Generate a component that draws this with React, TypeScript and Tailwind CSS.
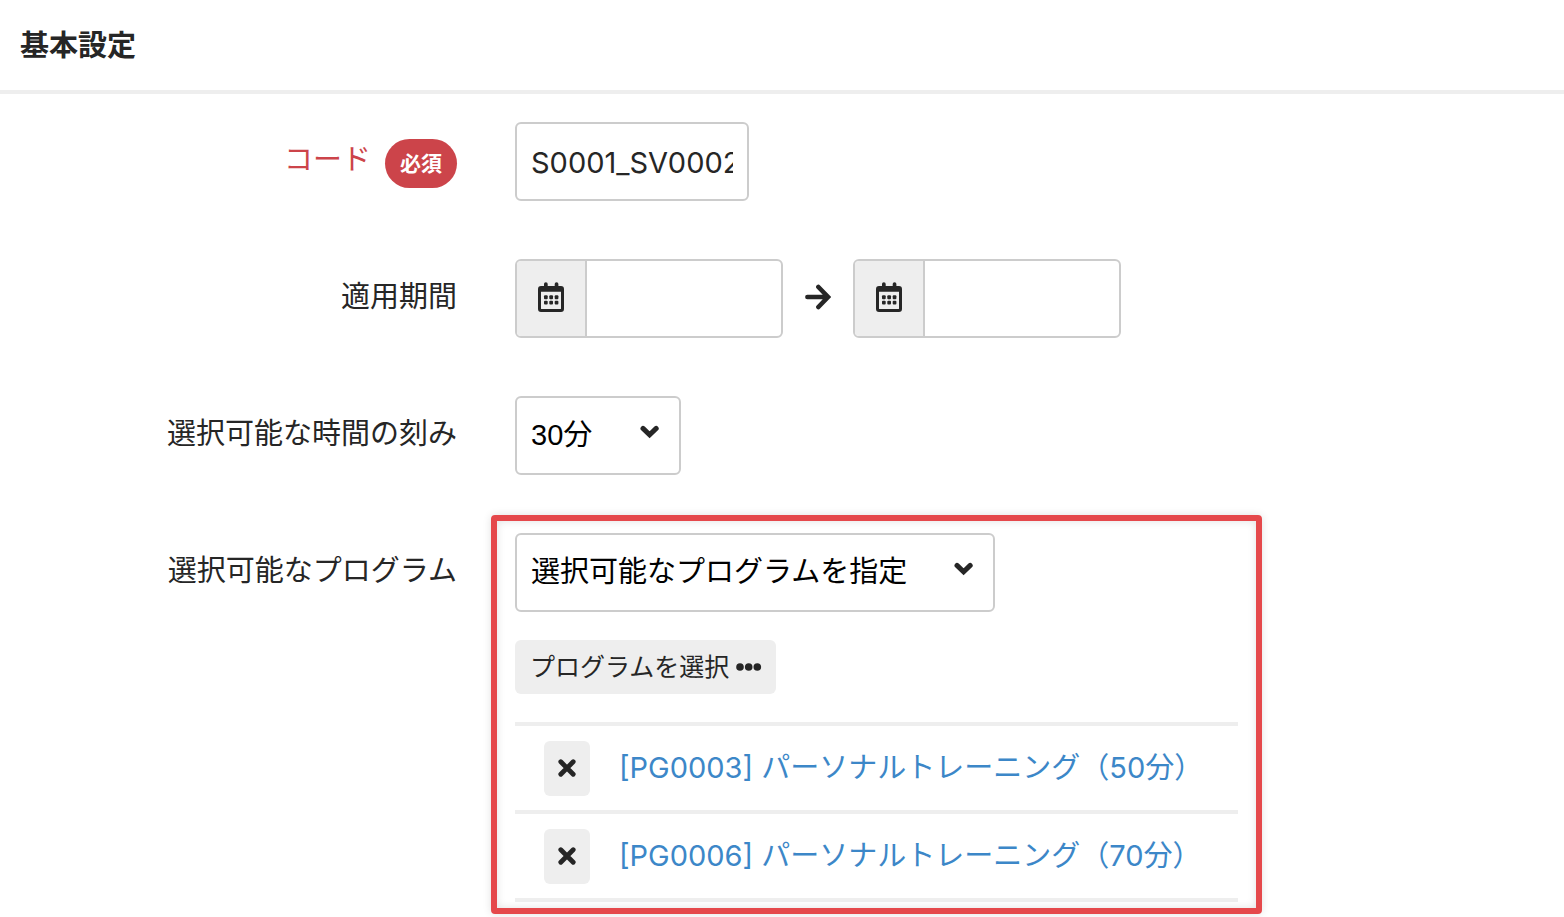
import type { ReactNode } from "react";

const programs = [
  { code: "PG0003", name: "パーソナルトレーニング（50分）" },
  { code: "PG0006", name: "パーソナルトレーニング（70分）" },
];

function CalendarIcon() {
  return (
    <svg width="26" height="30" viewBox="0 0 26 30" aria-hidden="true">
      <path
        fill="#262626"
        fillRule="evenodd"
        d="M3 4H6V2a1.85 1.85 0 0 1 3.7 0V4H16.7V2a1.85 1.85 0 0 1 3.7 0V4H23a3 3 0 0 1 3 3V27a3 3 0 0 1-3 3H3a3 3 0 0 1-3-3V7a3 3 0 0 1 3-3ZM3 9.7V26.4a.6.6 0 0 0 .6.6H22.4a.6.6 0 0 0 .6-.6V9.7Z"
      />
      {[13.3, 18.7].map((y) =>
        [6, 11.3, 16.7].map((x) => (
          <rect key={`${x}-${y}`} x={x} y={y} width="3.7" height="3.9" rx="1" fill="#262626" />
        )),
      )}
    </svg>
  );
}

function ArrowIcon() {
  return (
    <svg className="mb-1" width="26" height="26" viewBox="0 0 26 26" fill="none" stroke="#262626" strokeWidth="4.6" strokeLinecap="round" aria-hidden="true">
      <path d="M2.4 13H22M13.4 3L23 13L13.4 23" />
    </svg>
  );
}

function CrossIcon() {
  return (
    <svg width="18" height="18" viewBox="0 0 18 18" fill="none" stroke="#262626" strokeWidth="4.8" strokeLinecap="round" aria-hidden="true">
      <path d="M2.8 2.8L15.2 15.2M15.2 2.8L2.8 15.2" />
    </svg>
  );
}

function DotsIcon() {
  return (
    <svg width="26" height="8" viewBox="0 0 26 8" fill="#262626" aria-hidden="true">
      <circle cx="4" cy="4" r="3.8" />
      <circle cx="12.7" cy="4" r="3.8" />
      <circle cx="21.3" cy="4" r="3.8" />
    </svg>
  );
}

function Select({ id, option, width }: { id: string; option: string; width: string }) {
  return (
    <div className={`relative max-w-full ${width}`}>
      <select
        id={id}
        className="h-[79px] w-full appearance-none rounded-md border-2 border-[#cccccc] bg-white pr-12 pb-0.5 pl-[14px] font-['Liberation_Sans','Noto_Sans_CJK_JP',sans-serif] text-black"
      >
        <option>{option}</option>
      </select>
      <svg
        className="pointer-events-none absolute top-[29px] right-[21px]"
        width="20"
        height="14"
        viewBox="0 0 20 14"
        fill="none"
        stroke="#262626"
        strokeWidth="5"
        strokeLinecap="round"
        aria-hidden="true"
      >
        <path d="M3 3.4L9.6 9.8L16.2 3.4" />
      </svg>
    </div>
  );
}

function DateField({ label, id }: { label: string; id: string }) {
  return (
    <div className="flex h-[79px] w-[268px] overflow-hidden rounded-md border-2 border-[#cccccc] bg-white">
      <label htmlFor={id} aria-label={label} className="flex w-[70px] shrink-0 items-center justify-center border-r-2 border-[#cccccc] bg-[#eeeeee] pb-1">
        <CalendarIcon />
      </label>
      <input id={id} type="text" className="w-full min-w-0 px-[14px] outline-none" />
    </div>
  );
}

function Row({ label, children }: { label: ReactNode; children: ReactNode }) {
  return (
    <div className="grid grid-cols-[457fr_1107fr]">
      <div className="flex h-[79px] items-center justify-end pb-1">{label}</div>
      <div className="pl-[58px]">{children}</div>
    </div>
  );
}

export default function App() {
  return (
    <main className="bg-white font-[Inter,'Noto_Sans_CJK_JP',sans-serif] text-[29px] leading-[40px] text-[#262626]">
      <header className="flex h-[94px] items-center border-b-4 border-[#eeeeee] px-5 pt-0.5">
        <h1 className="font-bold">基本設定</h1>
      </header>

      <form className="flex flex-col gap-[58px] pt-7 pb-4">
        <Row
          label={
            <label htmlFor="code" className="flex items-center gap-[14px] text-[#cc444a]">
              コード
              <span className="mt-2 flex h-[49px] w-[72px] items-center justify-center rounded-full bg-[#cc444a] text-[21px] font-bold text-white">
                必須
              </span>
            </label>
          }
        >
          <input
            id="code"
            type="text"
            defaultValue="S0001_SV0002"
            className="block h-[79px] w-[234px] rounded-md border-2 border-[#cccccc] bg-white px-[14px] pt-0.5"
          />
        </Row>

        <Row label={<label htmlFor="from">適用期間</label>}>
          <div className="flex items-center gap-[22px]">
            <DateField id="from" label="開始日" />
            <ArrowIcon />
            <DateField id="to" label="終了日" />
          </div>
        </Row>

        <Row label={<label htmlFor="step">選択可能な時間の刻み</label>}>
          <Select id="step" option="30分" width="w-[166px]" />
        </Row>

        <Row label={<label htmlFor="program">選択可能なプログラム</label>}>
          <div className="relative max-w-[723px]">
            <Select id="program" option="選択可能なプログラムを指定" width="w-[480px]" />
            <button
              type="button"
              className="mt-7 flex h-[54px] items-center gap-[7px] rounded-md bg-[#eeeeee] pr-[14px] pl-[15px] text-[25px]"
            >
              プログラムを選択
              <DotsIcon />
            </button>
            <ul className="mt-7 border-b-4 border-[#eeeeee]">
              {programs.map((program) => (
                <li key={program.code} className="flex h-[88px] items-center border-t-4 border-[#eeeeee] pl-[29px]">
                  <button
                    type="button"
                    aria-label="削除"
                    className="flex h-[55px] w-[46px] shrink-0 items-center justify-center rounded-md bg-[#eeeeee]"
                  >
                    <CrossIcon />
                  </button>
                  <a href="#" className="ml-[29px] text-[#3c87c8]">
                    [{program.code}] {program.name}
                  </a>
                </li>
              ))}
            </ul>
            <div className="pointer-events-none absolute -inset-x-6 -top-[18px] -bottom-3 rounded-[4px] border-6 border-[#e5484b] shadow-[0_0_8px_rgba(0,0,0,0.12),inset_0_0_8px_rgba(0,0,0,0.12)]" />
          </div>
        </Row>
      </form>
    </main>
  );
}
